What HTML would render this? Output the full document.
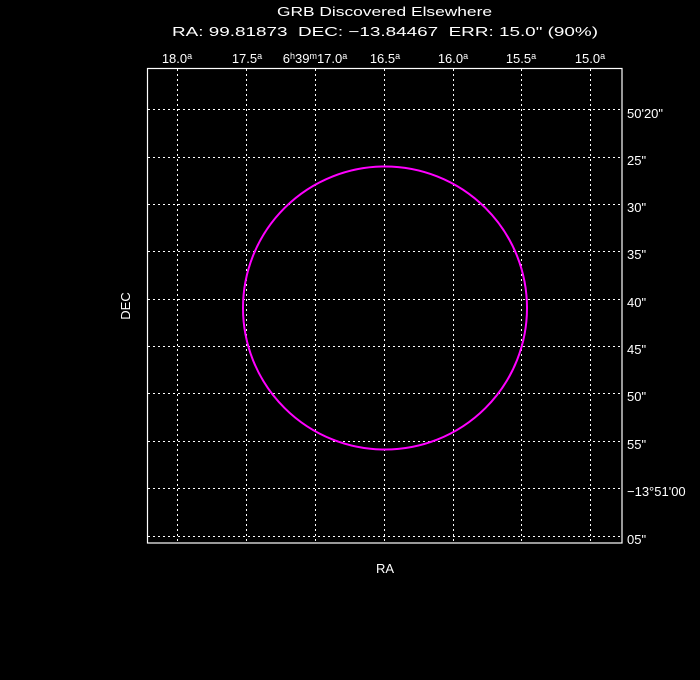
<!DOCTYPE html>
<html><head><style>
html,body{margin:0;padding:0;background:#000;}
svg{display:block;}
text{font-family:"Liberation Sans","DejaVu Sans",sans-serif;fill:#fff;font-size:13px;}
</style></head><body>
<svg width="700" height="680" viewBox="0 0 700 680" xmlns="http://www.w3.org/2000/svg">
<rect width="700" height="680" fill="#000"/>
<text x="277" y="16" font-size="15" textLength="215" lengthAdjust="spacingAndGlyphs">GRB Discovered Elsewhere</text>
<text x="172" y="36" font-size="15" textLength="426" lengthAdjust="spacingAndGlyphs" xml:space="preserve">RA: 99.81873  DEC: −13.84467  ERR: 15.0" (90%)</text>
<g font-size="13">
<text x="177" y="63" text-anchor="middle">18.0<tspan font-size="9" dy="-4">a</tspan></text>
<text x="247" y="63" text-anchor="middle">17.5<tspan font-size="9" dy="-4">a</tspan></text>
<text x="315" y="63" text-anchor="middle">6<tspan font-size="9" dy="-4">h</tspan><tspan dy="4">39</tspan><tspan font-size="9" dy="-4">m</tspan><tspan dy="4">17.0</tspan><tspan font-size="9" dy="-4">a</tspan></text>
<text x="385" y="63" text-anchor="middle">16.5<tspan font-size="9" dy="-4">a</tspan></text>
<text x="453" y="63" text-anchor="middle">16.0<tspan font-size="9" dy="-4">a</tspan></text>
<text x="521" y="63" text-anchor="middle">15.5<tspan font-size="9" dy="-4">a</tspan></text>
<text x="590" y="63" text-anchor="middle">15.0<tspan font-size="9" dy="-4">a</tspan></text>
</g>
<g stroke="#fff" stroke-width="1" stroke-dasharray="2,3" fill="none">
<line x1="177.5" y1="69" x2="177.5" y2="543"/>
<line x1="246.5" y1="69" x2="246.5" y2="543"/>
<line x1="315.5" y1="69" x2="315.5" y2="543"/>
<line x1="384.5" y1="69" x2="384.5" y2="543"/>
<line x1="453.5" y1="69" x2="453.5" y2="543"/>
<line x1="521.5" y1="69" x2="521.5" y2="543"/>
<line x1="590.5" y1="69" x2="590.5" y2="543"/>
<line x1="148" y1="109.5" x2="622" y2="109.5"/>
<line x1="148" y1="157.5" x2="622" y2="157.5"/>
<line x1="148" y1="204.5" x2="622" y2="204.5"/>
<line x1="148" y1="251.5" x2="622" y2="251.5"/>
<line x1="148" y1="299.5" x2="622" y2="299.5"/>
<line x1="148" y1="346.5" x2="622" y2="346.5"/>
<line x1="148" y1="393.5" x2="622" y2="393.5"/>
<line x1="148" y1="441.5" x2="622" y2="441.5"/>
<line x1="148" y1="488.5" x2="622" y2="488.5"/>
<line x1="148" y1="536.5" x2="622" y2="536.5"/>
</g>
<rect x="147.5" y="68.5" width="474.5" height="474.5" fill="none" stroke="#fff" stroke-width="1.2"/>
<ellipse cx="385" cy="308" rx="142" ry="141.5" fill="none" stroke="#ff00ff" stroke-width="2"/>
<g font-size="14">
<text x="627" y="118">50'20"</text>
<text x="627" y="165">25"</text>
<text x="627" y="212">30"</text>
<text x="627" y="259">35"</text>
<text x="627" y="307">40"</text>
<text x="627" y="354">45"</text>
<text x="627" y="401">50"</text>
<text x="627" y="449">55"</text>
<text x="627" y="496">−13°51'00</text>
<text x="627" y="544">05"</text>
</g>
<text x="385" y="573" text-anchor="middle" font-size="15">RA</text>
<text x="130" y="306" text-anchor="middle" font-size="15" transform="rotate(-90 130 306)">DEC</text>
</svg>
</body></html>
